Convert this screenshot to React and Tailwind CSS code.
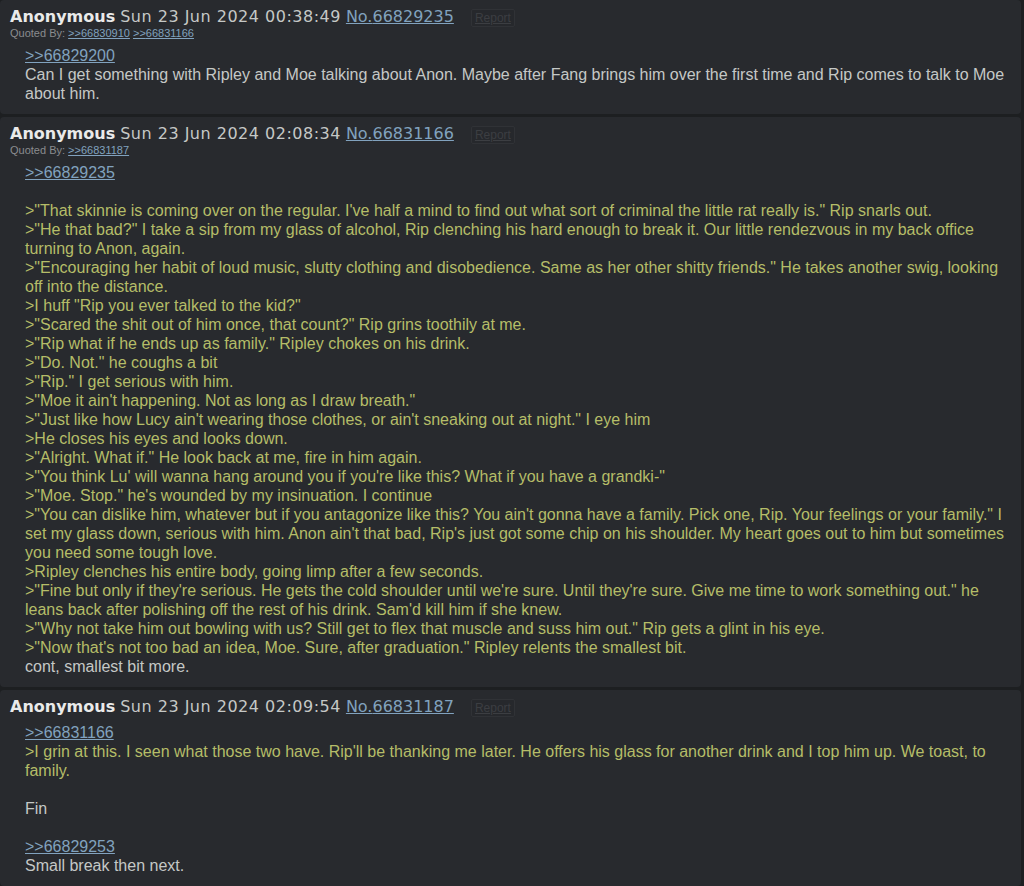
import React from "react";

const Q = ({ children }) => <span className="text-[#b5bd68]">{children}</span>;
const L = ({ children }) => (
  <a className="text-[#81a2be] underline cursor-pointer">{children}</a>
);

function Post({ time, no, quotedBy, children }) {
  return (
    <div className="bg-[#282a2e] rounded-[4px] mr-[3px] mb-[3px] pt-[7px] pb-[11px]">
      <div
        className="flex items-center h-[20px] pl-[10px] text-[16px] whitespace-nowrap"
        style={{ fontFamily: '"DejaVu Sans", Verdana, sans-serif' }}
      >
        <span className="font-bold text-[#eaeaea]">Anonymous</span>
        <span className="ml-[5px] text-[#c5c8c6] tracking-[0.5px]">{time}</span>
        <span className="ml-[5px] text-[#81a2be] underline">No.{no}</span>
        <span
          className="ml-[17px] mt-[1px] h-[18px] px-[3px] flex items-center border border-[#303236] rounded-[2px] text-[12px] text-[#3c3e42] bg-[#26282c] underline"
          style={{ fontFamily: '"Liberation Sans", Arial, sans-serif' }}
        >
          Report
        </span>
      </div>
      {quotedBy && (
        <div
          className="h-[13px] leading-[13px] pl-[10px] text-[11px] text-[#8a8c8e]"
          style={{ fontFamily: '"Liberation Sans", Arial, sans-serif' }}
        >
          Quoted By:{" "}
          {quotedBy.map((q, i) => (
            <React.Fragment key={q}>
              {i > 0 && " "}
              <a className="text-[#81a2be] underline">&gt;&gt;{q}</a>
            </React.Fragment>
          ))}
        </div>
      )}
      <div
        className="mt-[6px] pl-[25px] pr-[8px] text-[16px] leading-[19px] text-[#c5c8c6]"
        style={{ fontFamily: '"Liberation Sans", Arial, sans-serif' }}
      >
        {children}
      </div>
    </div>
  );
}

export default function App() {
  return (
    <div className="bg-[#1d1f21] min-h-[886px] w-[1024px] overflow-hidden">
      <Post time="Sun 23 Jun 2024 00:38:49" no="66829235" quotedBy={["66830910", "66831166"]}>
        <L>&gt;&gt;66829200</L>
        <br />
        Can I get something with Ripley and Moe talking about Anon. Maybe after Fang brings him over the first time and Rip comes to talk to Moe about him.
      </Post>
      <Post time="Sun 23 Jun 2024 02:08:34" no="66831166" quotedBy={["66831187"]}>
        <L>&gt;&gt;66829235</L>
        <br />
        <br />
        <Q>&gt;"That skinnie is coming over on the regular. I've half a mind to find out what sort of criminal the little rat really is." Rip snarls out.</Q>
        <br />
        <Q>&gt;"He that bad?" I take a sip from my glass of alcohol, Rip clenching his hard enough to break it. Our little rendezvous in my back office turning to Anon, again.</Q>
        <br />
        <Q>&gt;"Encouraging her habit of loud music, slutty clothing and disobedience. Same as her other shitty friends." He takes another swig, looking off into the distance.</Q>
        <br />
        <Q>&gt;I huff "Rip you ever talked to the kid?"</Q>
        <br />
        <Q>&gt;"Scared the shit out of him once, that count?" Rip grins toothily at me.</Q>
        <br />
        <Q>&gt;"Rip what if he ends up as family." Ripley chokes on his drink.</Q>
        <br />
        <Q>&gt;"Do. Not." he coughs a bit</Q>
        <br />
        <Q>&gt;"Rip." I get serious with him.</Q>
        <br />
        <Q>&gt;"Moe it ain't happening. Not as long as I draw breath."</Q>
        <br />
        <Q>&gt;"Just like how Lucy ain't wearing those clothes, or ain't sneaking out at night." I eye him</Q>
        <br />
        <Q>&gt;He closes his eyes and looks down.</Q>
        <br />
        <Q>&gt;"Alright. What if." He look back at me, fire in him again.</Q>
        <br />
        <Q>&gt;"You think Lu' will wanna hang around you if you're like this? What if you have a grandki-"</Q>
        <br />
        <Q>&gt;"Moe. Stop." he's wounded by my insinuation. I continue</Q>
        <br />
        <Q>&gt;"You can dislike him, whatever but if you antagonize like this? You ain't gonna have a family. Pick one, Rip. Your feelings or your family." I set my glass down, serious with him. Anon ain't that bad, Rip's just got some chip on his shoulder. My heart goes out to him but sometimes you need some tough love.</Q>
        <br />
        <Q>&gt;Ripley clenches his entire body, going limp after a few seconds.</Q>
        <br />
        <Q>&gt;"Fine but only if they're serious. He gets the cold shoulder until we're sure. Until they're sure. Give me time to work something out." he leans back after polishing off the rest of his drink. Sam'd kill him if she knew.</Q>
        <br />
        <Q>&gt;"Why not take him out bowling with us? Still get to flex that muscle and suss him out." Rip gets a glint in his eye.</Q>
        <br />
        <Q>&gt;"Now that's not too bad an idea, Moe. Sure, after graduation." Ripley relents the smallest bit.</Q>
        <br />
        cont, smallest bit more.
      </Post>
      <Post time="Sun 23 Jun 2024 02:09:54" no="66831187">
        <L>&gt;&gt;66831166</L>
        <br />
        <Q>&gt;I grin at this. I seen what those two have. Rip'll be thanking me later. He offers his glass for another drink and I top him up. We toast, to family.</Q>
        <br />
        <br />
        Fin
        <br />
        <br />
        <L>&gt;&gt;66829253</L>
        <br />
        Small break then next.
      </Post>
    </div>
  );
}
